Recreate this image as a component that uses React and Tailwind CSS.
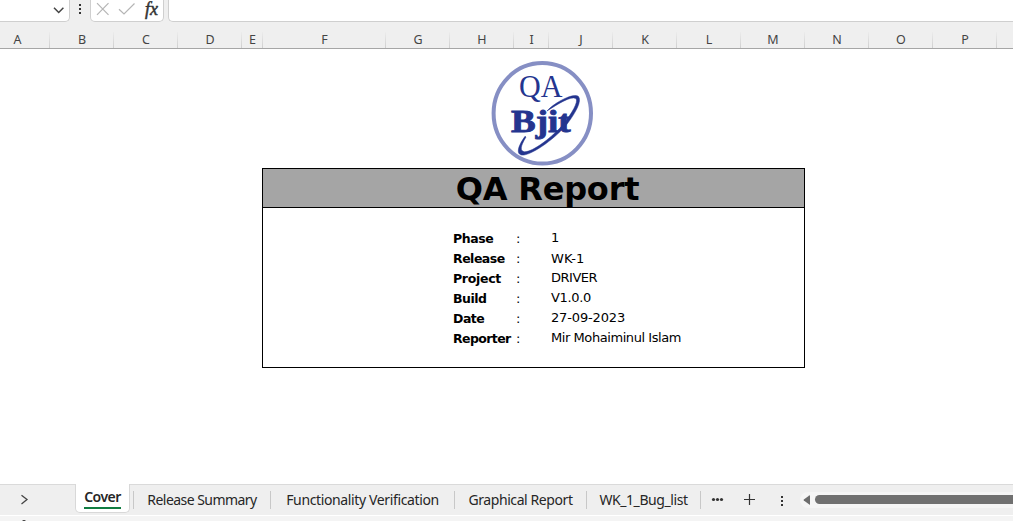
import React from 'react';

const columns = [
  ['B', 'w-16'], ['C', 'w-16'], ['D', 'w-16'], ['E', 'w-[21px]'], ['F', 'w-[123px]'],
  ['G', 'w-16'], ['H', 'w-16'], ['I', 'w-[35px]'], ['J', 'w-16'], ['K', 'w-16'],
  ['L', 'w-16'], ['M', 'w-16'], ['N', 'w-16'], ['O', 'w-16'], ['P', 'w-16'],
];

const details = [
  ['Phase', '1', 'pb-0.5', 'tracking-[-0.4px]', ''],
  ['Release', 'WK-1', '', 'tracking-[-0.5px]', 'tracking-[0.1px]'],
  ['Project', 'DRIVER', 'pb-0.5', 'tracking-[-0.3px]', 'tracking-[-0.5px]'],
  ['Build', 'V1.0.0', 'pb-0.5', 'tracking-[-0.5px]', 'tracking-[-0.35px]'],
  ['Date', '27-09-2023', 'pb-0.5', 'tracking-[-0.5px]', 'tracking-[-0.15px]'],
  ['Reporter', 'Mir Mohaiminul Islam', 'pb-0.5', 'tracking-[-0.6px]', 'tracking-[-0.43px]'],
];

function FormulaBar() {
  return (
    <div className="flex h-[22px] shrink-0">
      <div className="flex w-[70px] justify-end rounded-br-[5px] border-r border-b border-[#cfcfcf] bg-white">
        <svg className="h-[21px] w-[20px]" viewBox="0 0 20 21" fill="none" stroke="#444" strokeWidth="1.5">
          <path d="M5 7.8l4.7 4.7 4.7-4.7" />
        </svg>
      </div>
      <svg className="h-[22px] w-5" viewBox="0 0 20 22" fill="#333">
        <rect x="9" y="4" width="2" height="2" />
        <rect x="9" y="8" width="2" height="2" />
        <rect x="9" y="12" width="2" height="2" />
      </svg>
      <div className="flex w-[74px] rounded-b-[5px] border border-t-0 border-[#cfcfcf] bg-white">
        <svg className="h-[21px] w-[48px] shrink-0" viewBox="0 0 48 21" fill="none" stroke="#b5b5b5" strokeWidth="1.2">
          <path d="M6 3.2l11.5 11.6M17.500 3.200L6 14.800M28 9.200l5 4.800L43.500 3.500" />
        </svg>
        <span className="ml-[6px] font-['Liberation_Serif',serif] text-[18px] leading-[18px] text-[#333] italic [-webkit-text-stroke:0.5px_#333]">fx</span>
      </div>
      <div className="ml-1 flex-1 rounded-bl-[5px] border-b border-l border-[#cfcfcf] bg-white" />
    </div>
  );
}

function Divider() {
  return <div className="h-4 w-px bg-linear-to-b from-[#ececec] to-[#cfcfcf]" />;
}

function ColumnHeader() {
  return (
    <div className="flex h-[27px] shrink-0 items-end border-b border-[#a6a6a6] text-center text-[12.500px] leading-4 text-[#444]">
      <div className="flex w-[50px] items-end">
        <span className="w-[35px] shrink-0">A</span>
        <span className="flex-1" />
        <Divider />
      </div>
      {columns.map(([name, width]) => (
        <div key={name} className={'flex shrink-0 items-end ' + width}>
          <span className="flex-1 pl-px">{name}</span>
          <Divider />
        </div>
      ))}
    </div>
  );
}

function Logo() {
  return (
    <svg className="ml-[490px] h-[108px] w-[104px] shrink-0" viewBox="490 59 104 108">
      <ellipse cx="542.300" cy="113.300" rx="48.700" ry="50.200" fill="#fff" stroke="#868fc4" strokeWidth="4" />
      <g fill="#24358f" fontFamily="'Liberation Serif', serif">
        <text x="519" y="96.500" fontSize="31.500" textLength="43.500" lengthAdjust="spacingAndGlyphs">QA</text>
        <text x="511" y="132.300" fontSize="32.500" fontWeight="bold" stroke="#24358f" strokeWidth="0.9" textLength="59.500" lengthAdjust="spacingAndGlyphs">Bjit</text>
      </g>
      <path d="M547 111C555 102 574 92.500 578.500 96.500C582 101 576 112 567.500 123.500C556 138 534 153.500 524 155C517 156 515.500 149.500 525 136.300L526 137C520 147 520 151 524.500 151.800C533 152 553 136.500 563.500 124C572 113 578.500 102 576 98.500C571 95.500 557 104.500 547 111Z" fill="#24358f" stroke="#24358f" strokeWidth="0.5" />
    </svg>
  );
}

function Cover() {
  return (
    <main className="flex h-[435px] shrink-0 flex-col bg-white pt-2.5 font-['DejaVu_Sans',sans-serif]">
      <Logo />
      <section className="mt-px ml-[262px] h-[200px] w-[543px] border border-black text-black">
        <h1 className="flex h-[39px] items-center justify-center border-b border-black bg-[#a5a5a5] pl-7 text-[32px] leading-[39px] font-bold tracking-[-0.2px]"><span className="pt-0.5">QA Report</span></h1>
        <div className="mt-[21px] ml-[190px] text-[13px]">
          {details.map(([label, value, shift, labelSpacing, valueSpacing]) => (
            <div key={label} className="flex h-5 items-center whitespace-nowrap">
              <b className={'w-[63px] text-[12.500px] ' + labelSpacing}>{label}</b>
              <span className="w-[35px]">:</span>
              <span className={shift + ' ' + valueSpacing}>{value}</span>
            </div>
          ))}
        </div>
      </section>
    </main>
  );
}

function Tab({ width, spacing, children }) {
  return (
    <div className={'flex h-[18px] shrink-0 items-center justify-center border-r border-[#c8c8c8] whitespace-nowrap ' + width}>
      <span className={spacing}>{children}</span>
    </div>
  );
}

function SheetTabs() {
  return (
    <footer className="flex h-[37px] shrink-0 flex-col bg-[#f4f4f4]">
      <div className="flex h-8 shrink-0 border-b border-white bg-[#efefef] text-sm text-[#262626]">
        <div className="w-[75px] border-t border-[#dadada]">
          <svg className="mt-[7px] ml-[18px] h-4 w-3" viewBox="0 0 12 16" fill="none" stroke="#444" strokeWidth="1.300">
            <path d="M3.500 3.200L9 7.500l-5.500 4.400" />
          </svg>
        </div>
        <div className="flex h-[29px] w-[55px] justify-center rounded-b-[5px] border border-t-0 border-[#d8d8d8] bg-white">
          <span className="mt-[3px] h-[22px] w-[37px] border-b-2 border-[#107c41] text-center leading-5 font-semibold tracking-[-0.5px]">Cover</span>
        </div>
        <div className="flex flex-1 items-center border-t border-[#dadada]">
          <div className="h-[18px] w-1 border-r border-[#c8c8c8]" />
          <Tab width="w-[137px]" spacing="tracking-[-0.55px]">Release Summary</Tab>
          <Tab width="w-[184px]" spacing="tracking-[-0.37px]">Functionality Verification</Tab>
          <Tab width="w-[132px]" spacing="tracking-[-0.42px]">Graphical Report</Tab>
          <Tab width="w-[114px]" spacing="tracking-[-0.42px]">WK_1_Bug_list</Tab>
          <svg className="h-[30px] w-[99px] shrink-0" viewBox="701 485 99 30" fill="#333">
            <circle cx="713.500" cy="499.500" r="1.600" />
            <circle cx="717.500" cy="499.500" r="1.600" />
            <circle cx="721.500" cy="499.500" r="1.600" />
            <path d="M749.500 494v11M744 499.500h11" stroke="#333" strokeWidth="1.200" />
            <rect x="781" y="496" width="2" height="2" />
            <rect x="781" y="500" width="2" height="2" />
            <rect x="781" y="504" width="2" height="2" />
          </svg>
          <div className="flex h-4 flex-1 items-center rounded-l-full bg-[#f5f5f5]">
            <svg className="ml-[3px] h-2.5 w-2" viewBox="0 0 8 10" fill="#6c6c6c">
              <path d="M7 .5v9Q7 10 6.300 9.500L.8 5.500Q.3 5 .8 4.500L6.300 .5Q7 0 7 .5Z" />
            </svg>
            <div className="ml-1 h-[9px] flex-1 -translate-y-px rounded-l-full bg-[#707070]" />
          </div>
        </div>
      </div>
      <svg className="h-[5px] w-10" viewBox="0 516 40 5">
        <path d="M22 521q2-2 4 0Z" fill="#333" />
      </svg>
    </footer>
  );
}

export default function App() {
  return (
    <div className="flex h-[521px] w-[1013px] flex-col overflow-hidden bg-[#efefef] font-['Noto_Sans',sans-serif]">
      <FormulaBar />
      <ColumnHeader />
      <Cover />
      <SheetTabs />
    </div>
  );
}
